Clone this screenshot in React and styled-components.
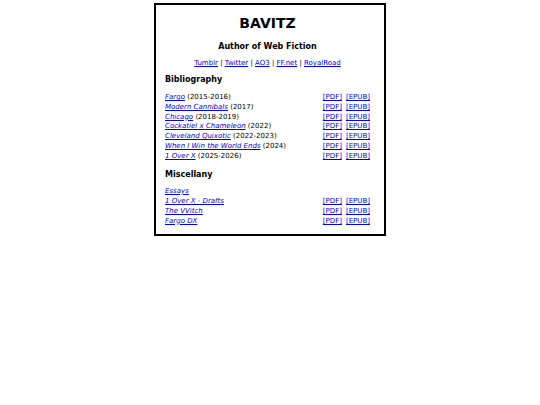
import styled, { createGlobalStyle } from "styled-components"

const GlobalStyle = createGlobalStyle`
    body {
        margin: 0;
        background: #fff;
        font-family: "DejaVu Sans", Verdana, sans-serif;
        color: #000;
    }
`

const Page = styled.div`
    width: 232px;
    margin: 3px auto 0;
    border: 2px solid #000;
    box-sizing: border-box;
    padding: 0 14px 8px 9px;
`

const Title = styled.h1`
    margin: 0;
    padding-top: 8px;
    text-align: center;
    font-size: 14px;
    line-height: 20px;
    font-weight: 700;
`

const Subtitle = styled.h2`
    margin: 9px 0 0;
    text-align: center;
    font-size: 8px;
    line-height: 10px;
    font-weight: 700;
`

const Links = styled.div`
    margin-top: 6px;
    text-align: center;
    font-size: 7px;
    line-height: 10px;
`

const Link = styled.a`
    color: #0000ee;
    text-decoration: underline;
    font-style: ${(p) => (p.$italic ? "italic" : "normal")};
`

const Section = styled.h3`
    margin: ${(p) => p.$top}px 0 0;
    font-size: 8px;
    line-height: 11px;
    font-weight: 700;
`

const List = styled.div`
    margin-top: ${(p) => p.$top}px;
    font-size: 7px;
`

const Row = styled.div`
    display: flex;
    justify-content: space-between;
    align-items: center;
    height: ${(p) => p.$h}px;
    line-height: ${(p) => p.$h}px;
    white-space: nowrap;
`

const Files = styled.span`
    display: flex;
    gap: 4px;
`

const books = [
    ["Fargo", "(2015-2016)"],
    ["Modern Cannibals", "(2017)"],
    ["Chicago", "(2018-2019)"],
    ["Cockatiel x Chameleon", "(2022)"],
    ["Cleveland Quixotic", "(2022-2023)"],
    ["When I Win the World Ends", "(2024)"],
    ["1 Over X", "(2025-2026)"],
]

const misc = [
    ["Essays", false],
    ["1 Over X - Drafts", true],
    ["The VVitch", true],
    ["Fargo DX", true],
]

const FileLinks = () => (
    <Files>
        <Link href="#">[PDF]</Link>
        <Link href="#">[EPUB]</Link>
    </Files>
)

const App = () => {
    return (
        <>
            <GlobalStyle />
            <Page>
                <Title>BAVITZ</Title>
                <Subtitle>Author of Web Fiction</Subtitle>
                <Links>
                    <Link href="#">Tumblr</Link> | <Link href="#">Twitter</Link> |{" "}
                    <Link href="#">AO3</Link> | <Link href="#">FF.net</Link> |{" "}
                    <Link href="#">RoyalRoad</Link>
                </Links>

                <Section $top={6}>Bibliography</Section>
                <List $top={8}>
                    {books.map(([name, years]) => (
                        <Row key={name} $h={9.8}>
                            <span>
                                <Link href="#" $italic>{name}</Link> {years}
                            </span>
                            <FileLinks />
                        </Row>
                    ))}
                </List>

                <Section $top={7}>Miscellany</Section>
                <List $top={6}>
                    {misc.map(([name, files]) => (
                        <Row key={name} $h={10}>
                            <Link href="#" $italic>{name}</Link>
                            {files && <FileLinks />}
                        </Row>
                    ))}
                </List>
            </Page>
        </>
    )
}

export default App
